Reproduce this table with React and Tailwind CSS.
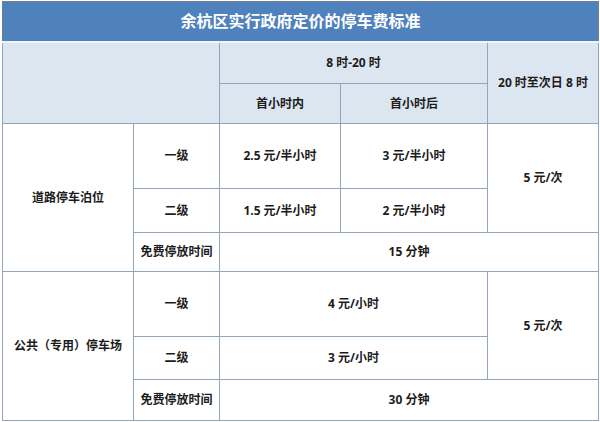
import React from "react";

const F = { fontFamily: '"Noto Sans", "Noto Sans CJK SC", sans-serif' };

export default function App() {
  const td = "border border-[#94a6ba] text-center align-middle p-0";
  const hd = td + " bg-[#dce6f1]";
  return (
    <div className="w-[600px] h-[422px] bg-white pl-[2px] pt-[1px]" style={F}>
      <table className="table-fixed border-collapse w-[596px] text-[12px] font-bold text-[#1c1c1c] leading-none border border-[#6f7f8f]">
        <colgroup>
          <col className="w-[131px]" />
          <col className="w-[86px]" />
          <col className="w-[121px]" />
          <col className="w-[147px]" />
          <col className="w-[111px]" />
        </colgroup>
        <tbody>
          <tr className="h-[40px]">
            <td colSpan={5} className="bg-[#4f81bd] text-white text-[16px] text-center align-middle border border-[#6f7f8f] border-b-2 border-b-[#eef3f9]">
              余杭区实行政府定价的停车费标准
            </td>
          </tr>
          <tr className="h-[42px]">
            <td colSpan={2} rowSpan={2} className={hd}></td>
            <td colSpan={2} className={hd}>8 时-20 时</td>
            <td rowSpan={2} className={hd}>20 时至次日 8 时</td>
          </tr>
          <tr className="h-[40px]">
            <td className={hd}>首小时内</td>
            <td className={hd}>首小时后</td>
          </tr>
          <tr className="h-[65px]">
            <td rowSpan={3} className={td}>道路停车泊位</td>
            <td className={td}>一级</td>
            <td className={td}>2.5 元/半小时</td>
            <td className={td}>3 元/半小时</td>
            <td rowSpan={2} className={td}>5 元/次</td>
          </tr>
          <tr className="h-[44px]">
            <td className={td}>二级</td>
            <td className={td}>1.5 元/半小时</td>
            <td className={td}>2 元/半小时</td>
          </tr>
          <tr className="h-[39px]">
            <td className={td}>免费停放时间</td>
            <td colSpan={3} className={td}>15 分钟</td>
          </tr>
          <tr className="h-[65px]">
            <td rowSpan={3} className={td}>公共（专用）停车场</td>
            <td className={td}>一级</td>
            <td colSpan={2} className={td}>4 元/小时</td>
            <td rowSpan={2} className={td}>5 元/次</td>
          </tr>
          <tr className="h-[43px]">
            <td className={td}>二级</td>
            <td colSpan={2} className={td}>3 元/小时</td>
          </tr>
          <tr className="h-[41px]">
            <td className={td}>免费停放时间</td>
            <td colSpan={3} className={td}>30 分钟</td>
          </tr>
        </tbody>
      </table>
    </div>
  );
}
